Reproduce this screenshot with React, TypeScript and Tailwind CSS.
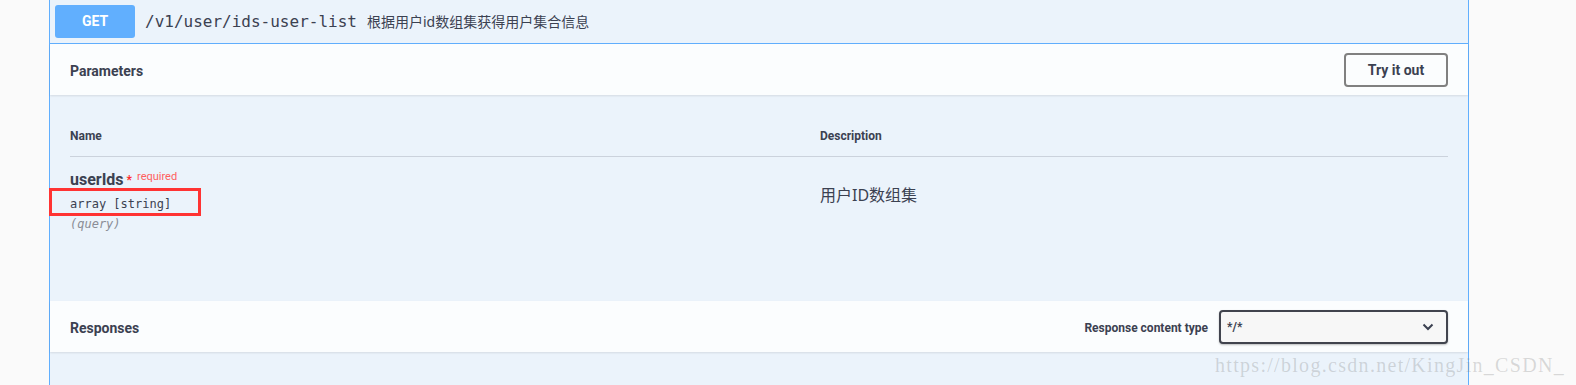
import React from "react";

const sans = "font-['Roboto','Noto_Sans_CJK_SC',sans-serif]";
const mono = "font-['DejaVu_Sans_Mono','Liberation_Mono',monospace]";
const cjk = "font-['Noto_Sans','Noto_Sans_CJK_SC',sans-serif]";

function SectionHeader({ title, children }: { title: string; children?: React.ReactNode }) {
  return (
    <div className="flex h-[51px] items-center justify-between bg-white/80 px-[20px] shadow-[0_1px_2px_rgba(0,0,0,0.1)] relative z-10">
      <h4 className={`${sans} mt-[3px] text-[14px] font-bold text-[#3b4151]`}>{title}</h4>
      {children}
    </div>
  );
}

export default function App() {
  return (
    <div className="h-[385px] w-[1576px] overflow-hidden bg-[#fafafa] text-[#3b4151]">
      <div className="relative ml-[49px] h-full w-[1420px] border-x border-[#61affe] bg-[#ebf3fb]">
        {/* summary */}
        <div className="flex h-[44px] items-center border-b border-[#61affe] px-[5px]">
          <span className={`${sans} flex h-[33px] w-[80px] items-center justify-center rounded-[3px] bg-[#61affe] text-[14px] font-bold text-white`}>
            GET
          </span>
          <span className={`${mono} px-[10px] text-[16px] text-[#3b4151]`}>/v1/user/ids-user-list</span>
          <span className={`${cjk} text-[14px] text-[#3b4151]`}>根据用户id数组集获得用户集合信息</span>
        </div>

        <SectionHeader title="Parameters">
          <button className={`${sans} h-[34px] w-[104px] rounded-[4px] border-2 border-[#808080] bg-transparent pt-[2px] text-[14px] font-bold text-[#3b4151]`}>
            Try it out
          </button>
        </SectionHeader>

        {/* parameters table */}
        <div className="h-[206px] px-[20px] pt-[33px]">
          <div className="flex w-[1378px] border-b border-[#cbd2dc] pb-[12px]">
            <div className={`${sans} w-[750px] text-[12px] font-bold leading-[16px]`}>Name</div>
            <div className={`${sans} text-[12px] font-bold leading-[16px]`}>Description</div>
          </div>
          <div className="flex w-[1378px] pt-[13px]">
            <div className="w-[750px]">
              <div className="flex items-start">
                <span className={`${sans} text-[16px] font-bold leading-[20px]`}>userIds</span>
                <span className={`${sans} ml-[3px] mt-[4px] text-[12px] font-bold leading-[12px] text-[#ff2b2b]`}>*</span>
                <span className={`${sans} ml-[5px] mt-[1px] text-[11px] leading-[11px] text-[#ff6060]`}>required</span>
              </div>
              <div className={`${mono} mt-[6px] text-[12px] leading-[16px]`}>array [string]</div>
              <div className={`${mono} mt-[4px] text-[12px] italic leading-[16px] text-[#8a8d96]`}>(query)</div>
            </div>
            <div className={`${cjk} mt-[14px] text-[16px] leading-[22px]`}>用户ID数组集</div>
          </div>
        </div>

        <SectionHeader title="Responses">
          <div className="flex items-center">
            <span className={`${sans} mr-[11px] mt-[2px] text-[12px] font-bold`}>Response content type</span>
            <div className="flex h-[34px] w-[229px] items-center justify-between rounded-[4px] border-2 border-[#41444e] bg-[#f7f7f7] pl-[6px] pr-[12px] shadow-[0_1px_2px_rgba(0,0,0,0.25)]">
              <span className={`${sans} text-[12px] font-bold`}>*/*</span>
              <svg width="12" height="8" viewBox="0 0 12 8">
                <polyline points="1.5,1.5 6,6 10.5,1.5" fill="none" stroke="#3b4151" strokeWidth="2" />
              </svg>
            </div>
          </div>
        </SectionHeader>

        {/* red annotation box */}
        <div className="absolute left-[-1px] top-[188px] h-[28px] w-[152px] border-[3px] border-[#f33]" />
      </div>

      {/* watermark */}
      <div className="absolute left-[1215px] top-[352px] font-['Liberation_Serif',serif] text-[20px] leading-[26px] tracking-[1.3px] text-[rgba(128,128,128,0.28)]">
        https://blog.csdn.net/KingJin_CSDN_
      </div>
    </div>
  );
}
